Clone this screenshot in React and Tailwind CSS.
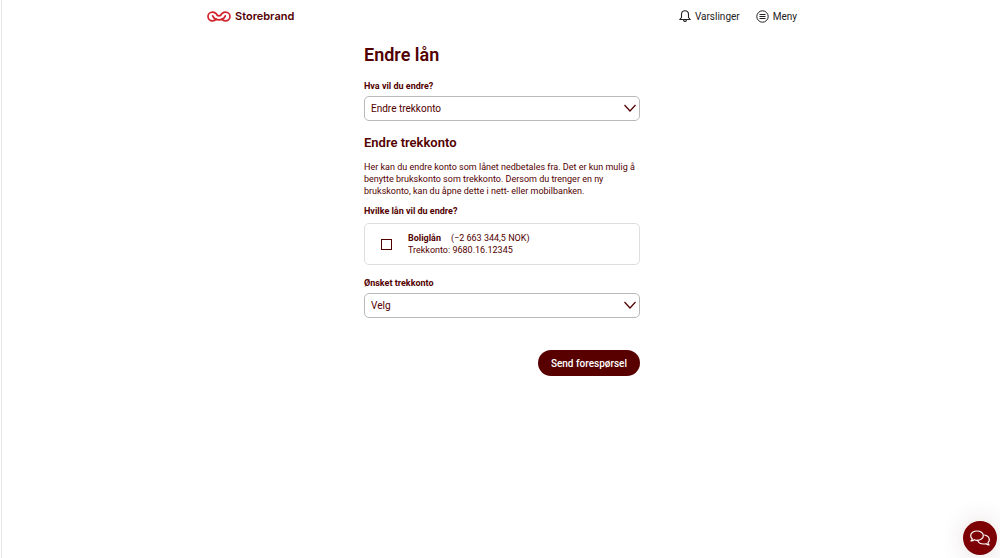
import { useState } from "react";

const sans = "font-['Roboto','Liberation_Sans',sans-serif]";

function LogoMark() {
  return (
    <svg viewBox="0 0 72 32" className="h-[11px] w-6" fill="none" stroke="#d4232b" strokeWidth="5.2" strokeLinecap="round" aria-hidden="true">
      <path d="M26 6C23 4 20 3 17 3 9 3 3 9 3 16s6 13 14 13c5 0 8-2 11-5" />
      <path d="M46 6c3-2 6-3 9-3 8 0 14 6 14 13s-6 13-14 13c-5 0-8-2-11-5" />
      <path d="M17 14c3 7 10 12 19 12s16-5 19-12" />
      <path d="M28 8c3 8 13 8 16 0" />
    </svg>
  );
}

function BellIcon() {
  return (
    <svg viewBox="0 0 24 24" className="size-3" fill="none" stroke="currentColor" strokeWidth="2.2" strokeLinejoin="round" aria-hidden="true">
      <path d="M12 1.500c-4 0-7 3-7 7V15l-3.500 4h21L19 15V8.500c0-4-3-7-7-7Z" />
      <path d="M9 19c0 2.500 1 4 3 4s3-1.500 3-4" />
    </svg>
  );
}

function MenuIcon() {
  return (
    <svg viewBox="0 0 13 13" className="size-[13px]" fill="none" stroke="currentColor" strokeWidth="1" aria-hidden="true">
      <circle cx="6.5" cy="6.5" r="5.7" />
      <path d="M3.500 4.500h6M3.500 6.500h6M3.500 8.500h6" />
    </svg>
  );
}

function ChatIcon() {
  return (
    <svg viewBox="0 0 60 48" className="h-4 w-5" fill="none" stroke="currentColor" strokeWidth="3.6" strokeLinejoin="round" strokeLinecap="round" aria-hidden="true">
      <path d="M7 27C4 24 2 21 2 17 2 9 11 3 21 3s19 6 19 14-9 14-19 14c-3 0-6-1-8-2-3 3-6 4-10 4 2-2 4-4 4-6Z" />
      <path d="M44 15c8 2 14 7 14 14 0 4-2 7-4 9 0 3 1 5 3 7-4 0-7-2-9-4-2 1-5 1-7 1-9 0-16-4-18-11" />
    </svg>
  );
}

function SelectField({ id, label, value, onChange, options }) {
  return (
    <div>
      <label htmlFor={id} className="block text-[9px] leading-3 font-bold">
        {label}
      </label>
      <div className="relative mt-1">
        <select
          id={id}
          value={value}
          onChange={onChange}
          className="block h-[25px] w-full appearance-none rounded-[5px] border border-[#bdb8b8] bg-white pr-6 pl-1.5 text-[10px]"
        >
          {options.map((o) => (
            <option key={o}>{o}</option>
          ))}
        </select>
        <svg
          viewBox="0 0 12 8"
          className="pointer-events-none absolute top-2 right-1 h-2 w-3"
          fill="none"
          stroke="currentColor"
          strokeWidth="1.2"
          aria-hidden="true"
        >
          <path d="M.5 1 6 7l5.500-6" />
        </svg>
      </div>
    </div>
  );
}

export default function App() {
  const [change, setChange] = useState("Endre trekkonto");
  const [account, setAccount] = useState("Velg");
  const [checked, setChecked] = useState(false);

  return (
    <div className={`ml-px min-h-screen border-l border-[#e8e8e8] bg-white pl-0.5 text-[#520000] ${sans}`}>
      <header className="mx-auto flex h-8 max-w-[590px] items-center justify-between">
        <a href="#" className="flex items-center gap-1 font-['Inter',sans-serif] text-[11px] font-semibold">
          <LogoMark />
          Storebrand
        </a>
        <nav className="flex items-center gap-4 text-[10px] text-[#222]">
          <button className="flex items-center gap-1">
            <BellIcon />
            Varslinger
          </button>
          <button className="flex items-center gap-1">
            <MenuIcon />
            Meny
          </button>
        </nav>
      </header>

      <main className="mx-auto max-w-[276px] pt-[11px]">
        <h1 className="text-lg leading-6 font-semibold">Endre lån</h1>

        <form className="mt-[13px]" onSubmit={(e) => e.preventDefault()}>
          <SelectField
            id="change"
            label="Hva vil du endre?"
            value={change}
            onChange={(e) => setChange(e.target.value)}
            options={["Endre trekkonto", "Endre forfallsdato", "Endre løpetid"]}
          />

          <h2 className="mt-3 text-[13px] leading-5 font-semibold">Endre trekkonto</h2>
          <p className="mt-2 text-[9px] leading-3">
            Her kan du endre konto som lånet nedbetales fra. Det er kun mulig å benytte brukskonto som trekkonto.
            Dersom du trenger en ny brukskonto, kan du åpne dette i nett- eller mobilbanken.
          </p>

          <fieldset className="mt-2">
            <legend className="text-[9px] leading-3 font-bold">Hvilke lån vil du endre?</legend>
            <label className="mt-1.5 flex h-[42px] items-center rounded-[5px] border border-[#dedede] pl-4">
              <input
                type="checkbox"
                checked={checked}
                onChange={(e) => setChecked(e.target.checked)}
                className="size-[11px] appearance-none border border-[#520000] checked:bg-[#520000]"
              />
              <span className="ml-4 text-[9px] leading-3">
                <span className="flex gap-2.5">
                  <strong className="font-bold">Boliglån</strong>
                  <span>(−2 663 344,5 NOK)</span>
                </span>
                <span className="block">Trekkonto: 9680.16.12345</span>
              </span>
            </label>
          </fieldset>

          <div className="mt-3">
            <SelectField
              id="account"
              label="Ønsket trekkonto"
              value={account}
              onChange={(e) => setAccount(e.target.value)}
              options={["Velg", "9680.16.12345"]}
            />
          </div>

          <div className="mt-8 flex justify-end">
            <button
              type="submit"
              className="h-[26px] rounded-full bg-[#580000] px-[13px] text-[10px] font-medium text-white"
            >
              Send forespørsel
            </button>
          </div>
        </form>
      </main>

      <button
        aria-label="Chat"
        className="fixed right-[3px] bottom-[3px] flex size-[34px] items-center justify-center rounded-full bg-[#7d0005] text-white shadow-[0_0_24px_rgba(90,0,0,0.15)]"
      >
        <ChatIcon />
      </button>
    </div>
  );
}
